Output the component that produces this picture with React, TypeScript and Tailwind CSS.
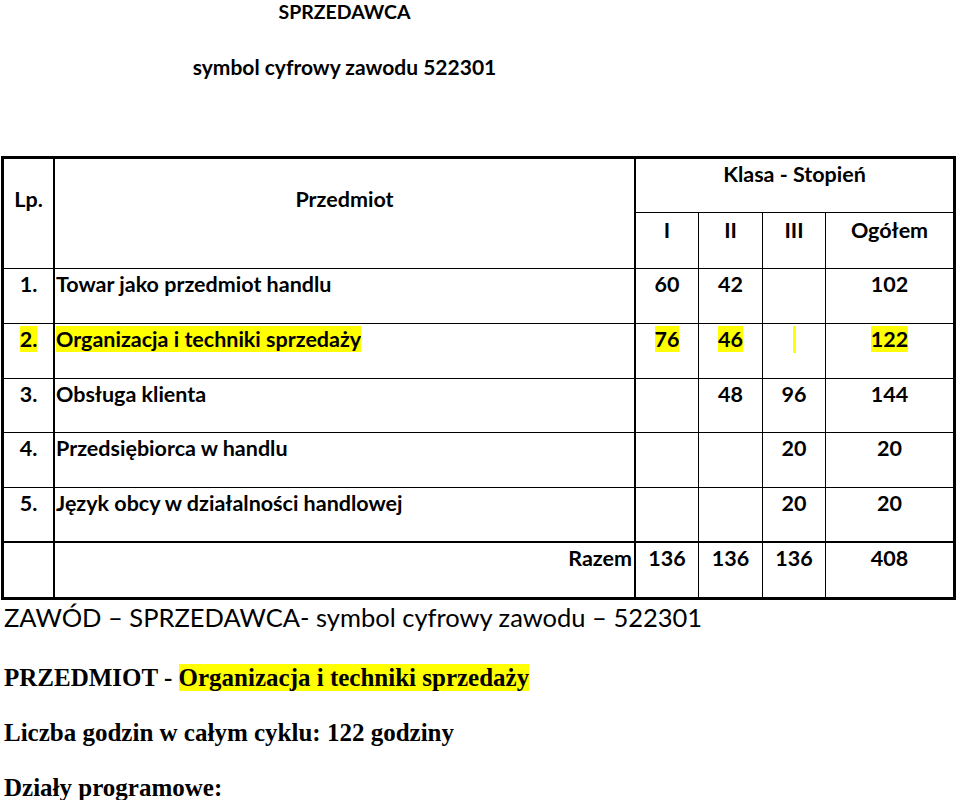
import React from 'react';

type Row = {
  lp: string;
  name: string;
  i: string;
  ii: string;
  iii: string;
  total: string;
  marked?: boolean;
};

const rows: Row[] = [
  { lp: '1.', name: 'Towar jako przedmiot handlu', i: '60', ii: '42', iii: '', total: '102' },
  { lp: '2.', name: 'Organizacja i techniki sprzedaży', i: '76', ii: '46', iii: '', total: '122', marked: true },
  { lp: '3.', name: 'Obsługa klienta', i: '', ii: '48', iii: '96', total: '144' },
  { lp: '4.', name: 'Przedsiębiorca w handlu', i: '', ii: '', iii: '20', total: '20' },
  { lp: '5.', name: 'Język obcy w działalności handlowej', i: '', ii: '', iii: '20', total: '20' },
];

const rowHeights = ['h-[55px]', 'h-[55px]', 'h-[54px]', 'h-[55px]', 'h-[55px]'];

// yellow marker like the highlighted text in the source document
function Mark({ on, children }: { on?: boolean; children: React.ReactNode }) {
  if (!on) return <>{children}</>;
  return <span className="bg-[#ffff00]">{children}</span>;
}

const cell = 'border-r border-b border-black align-top pt-[3px] leading-[1.2]';

export default function App() {
  return (
    <div className="min-h-[800px] w-[960px] bg-white text-black">
      <div className="ml-[54px] w-[581px] text-center font-['Lato',sans-serif] font-bold leading-[1.2]">
        <p className="text-[19.5px]">SPRZEDAWCA</p>
        <p className="mt-[31px] text-[21px]">symbol cyfrowy zawodu 522301</p>
      </div>

      <table className="mt-[76px] ml-px w-[955px] table-fixed border-separate border-spacing-0 font-['Lato',sans-serif] text-[21.5px] font-bold">
        <colgroup>
          <col className="w-[54px]" />
          <col className="w-[581px]" />
          <col className="w-[63px]" />
          <col className="w-[64px]" />
          <col className="w-[63px]" />
          <col className="w-[130px]" />
        </colgroup>
        <tbody>
          <tr className="h-[57px]">
            <td rowSpan={2} className="border-t-[3px] border-l-[3px] border-r-2 border-b border-black pt-[28px] text-center align-top leading-[1.2]">
              Lp.
            </td>
            <td rowSpan={2} className="border-t-[3px] border-r-2 border-b border-black pt-[28px] text-center align-top leading-[1.2]">
              Przedmiot
            </td>
            <td colSpan={4} className="border-t-[3px] border-r-[3px] border-b border-black pt-[3px] text-center align-top leading-[1.2]">
              Klasa - Stopień
            </td>
          </tr>
          <tr className="h-[56px]">
            <td className={`${cell} pt-[5px] text-center`}>I</td>
            <td className={`${cell} pt-[5px] text-center`}>II</td>
            <td className={`${cell} pt-[5px] text-center`}>III</td>
            <td className={`${cell} border-r-[3px] pt-[5px] text-center`}>Ogółem</td>
          </tr>

          {rows.map((r, idx) => (
            <tr key={r.lp} className={rowHeights[idx]}>
              <td className={`${cell} border-l-[3px] border-r-2 text-center ${idx === 4 ? 'border-b-2' : ''}`}>
                <Mark on={r.marked}>{r.lp}</Mark>
              </td>
              <td className={`${cell} border-r-2 pl-px ${idx === 4 ? 'border-b-2' : ''}`}>
                <Mark on={r.marked}>{r.name}</Mark>
              </td>
              <td className={`${cell} text-center ${idx === 4 ? 'border-b-2' : ''}`}>
                <Mark on={r.marked}>{r.i}</Mark>
              </td>
              <td className={`${cell} text-center ${idx === 4 ? 'border-b-2' : ''}`}>
                <Mark on={r.marked}>{r.ii}</Mark>
              </td>
              <td className={`${cell} text-center ${idx === 4 ? 'border-b-2' : ''}`}>
                {r.marked ? (
                  <span className="mt-[-1px] inline-block h-[27px] w-[3px] bg-[#ffff00] align-top" />
                ) : (
                  r.iii
                )}
              </td>
              <td className={`${cell} border-r-[3px] text-center ${idx === 4 ? 'border-b-2' : ''}`}>
                <Mark on={r.marked}>{r.total}</Mark>
              </td>
            </tr>
          ))}

          <tr className="h-[57px]">
            <td className={`${cell} border-l-[3px] border-r-2 border-b-[3px]`} />
            <td className={`${cell} border-r-2 border-b-[3px] pr-[2px] text-right`}>Razem</td>
            <td className={`${cell} border-b-[3px] text-center`}>136</td>
            <td className={`${cell} border-b-[3px] text-center`}>136</td>
            <td className={`${cell} border-b-[3px] text-center`}>136</td>
            <td className={`${cell} border-r-[3px] border-b-[3px] text-center`}>408</td>
          </tr>
        </tbody>
      </table>

      <div className="pl-[4px]">
        <p className="mt-[2px] font-['Lato',sans-serif] text-[25.5px] leading-[1.2]">
          ZAWÓD – SPRZEDAWCA- symbol cyfrowy zawodu – 522301
        </p>
        <p className="mt-[32px] font-['Liberation_Serif',serif] text-[25px] font-bold leading-[1.15]">
          PRZEDMIOT - <span className="bg-[#ffff00]">Organizacja i techniki sprzedaży</span>
        </p>
        <p className="mt-[26px] font-['Liberation_Serif',serif] text-[25px] font-bold leading-[1.15]">
          Liczba godzin w całym cyklu: 122 godziny
        </p>
        <p className="mt-[26px] font-['Liberation_Serif',serif] text-[25px] font-bold leading-[1.15]">
          Działy programowe:
        </p>
      </div>
    </div>
  );
}
